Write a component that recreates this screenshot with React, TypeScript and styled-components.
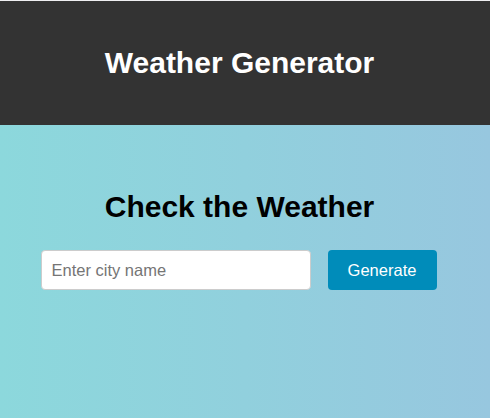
import React from "react";
import styled, { createGlobalStyle } from "styled-components";

const GlobalStyle = createGlobalStyle`
  html, body {
    margin: 0;
    padding: 0;
    height: 100%;
  }
  body {
    font-family: "Liberation Sans", Arial, sans-serif;
    background: #efeff2;
    padding-top: 1px;
    box-sizing: border-box;
  }
  #root {
    min-height: 417px;
    display: flex;
    flex-direction: column;
  }
`;

const Header = styled.header`
  background: #333333;
  height: 124px;
  display: flex;
  align-items: center;
  justify-content: center;
  padding-right: 11px;
`;

const Title = styled.h1`
  margin: 0;
  color: #ffffff;
  font-size: 30px;
  font-weight: bold;
  line-height: 34px;
`;

const Main = styled.main`
  flex: 1;
  background: linear-gradient(90deg, #8cd8dc 0%, #91d0dd 50%, #97c7df 100%);
  display: flex;
  flex-direction: column;
  align-items: center;
  padding: 64px 11px 0 0;
`;

const Heading = styled.h2`
  margin: 0 0 26px;
  font-size: 30px;
  font-weight: bold;
  line-height: 35px;
  color: #000000;
`;

const Form = styled.form`
  display: flex;
  align-items: center;
  gap: 17px;
  margin-right: 2px;
`;

const CityInput = styled.input`
  box-sizing: border-box;
  width: 270px;
  height: 40px;
  padding: 0 10px;
  border: 1px solid #cccccc;
  border-radius: 4px;
  background: #ffffff;
  font-family: "Liberation Sans", Arial, sans-serif;
  font-size: 16.5px;
  color: #333;
  outline: none;
  &::placeholder {
    color: #757575;
  }
`;

const GenerateButton = styled.button`
  box-sizing: border-box;
  width: 109px;
  height: 40px;
  border: none;
  border-radius: 4px;
  background: #008cba;
  color: #ffffff;
  font-family: "Liberation Sans", Arial, sans-serif;
  font-size: 16.5px;
  cursor: pointer;
`;

export default function App() {
  return (
    <>
      <GlobalStyle />
      <Header>
        <Title>Weather Generator</Title>
      </Header>
      <Main>
        <Heading>Check the Weather</Heading>
        <Form onSubmit={(e) => e.preventDefault()}>
          <CityInput type="text" placeholder="Enter city name" />
          <GenerateButton type="submit">Generate</GenerateButton>
        </Form>
      </Main>
    </>
  );
}
